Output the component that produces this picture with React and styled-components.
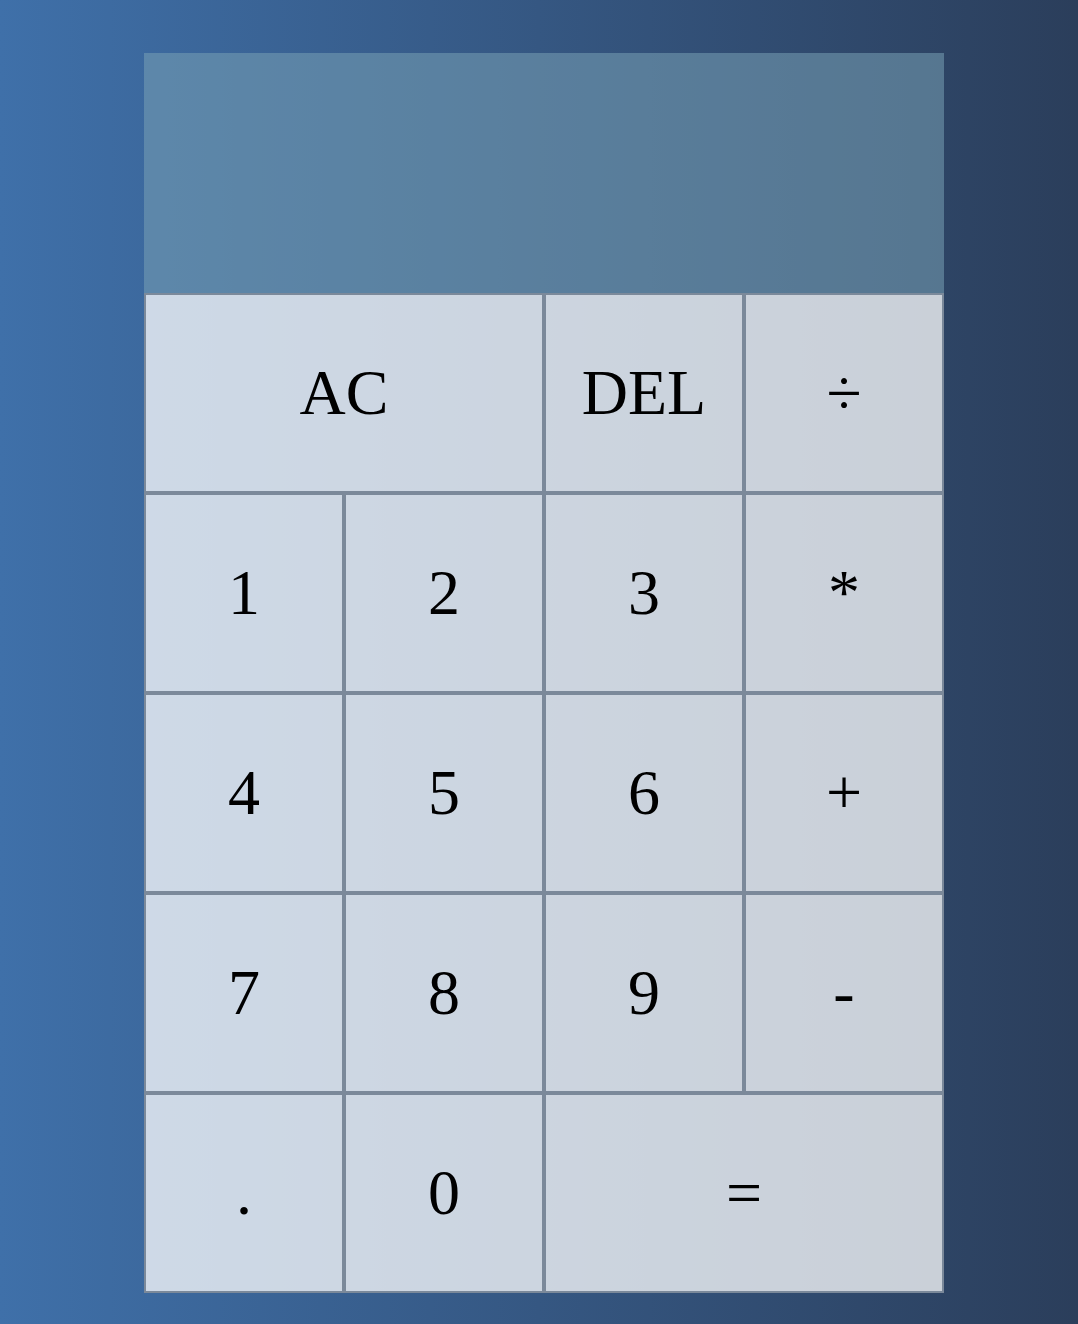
import React from 'react';
import styled, { createGlobalStyle } from 'styled-components';

const BORDER = '#7b899a';

const GlobalStyle = createGlobalStyle`
  * {
    box-sizing: border-box;
  }
  body {
    margin: 0;
    padding: 0;
    background: linear-gradient(to right, #3f70a9, #2b3e5b);
    font-family: serif;
  }
`;

const keys = [
  { label: 'AC', span: 2 },
  { label: 'DEL' },
  { label: '÷' },
  { label: '1' },
  { label: '2' },
  { label: '3' },
  { label: '*' },
  { label: '4' },
  { label: '5' },
  { label: '6' },
  { label: '+' },
  { label: '7' },
  { label: '8' },
  { label: '9' },
  { label: '-' },
  { label: '.' },
  { label: '0' },
  { label: '=', span: 2 },
];

const App = () => (
  <Page>
    <GlobalStyle />
    <CalculatorGrid>
      <Output>
        <PreviousOperand />
        <CurrentOperand />
      </Output>
      {keys.map((key) => (
        <Key key={key.label} $span={key.span}>
          {key.label}
        </Key>
      ))}
    </CalculatorGrid>
  </Page>
);

const Page = styled.div`
  min-height: 100vh;
  display: flex;
  justify-content: center;
  align-items: flex-start;
  padding: 53px 0 31px 10px;
`;

const CalculatorGrid = styled.div`
  display: grid;
  grid-template-columns: repeat(4, 200px);
  grid-template-rows: minmax(240px, auto) repeat(5, 200px);
`;

const Output = styled.div`
  grid-column: 1 / -1;
  background-color: rgba(120, 160, 180, 0.55);
  display: flex;
  flex-direction: column;
  align-items: flex-end;
  justify-content: space-around;
  padding: 20px;
  word-wrap: break-word;
  word-break: break-all;
`;

const PreviousOperand = styled.div`
  color: rgba(255, 255, 255, 0.75);
  font-size: 3rem;
`;

const CurrentOperand = styled.div`
  color: white;
  font-size: 5rem;
`;

const Key = styled.button`
  grid-column: span ${({ $span }) => $span || 1};
  font-family: serif;
  font-size: 64px;
  color: #000;
  border: 2px solid ${BORDER};
  outline: none;
  background-color: rgba(255, 255, 255, 0.75);
  cursor: pointer;
  padding: 0;
`;

export default App;
